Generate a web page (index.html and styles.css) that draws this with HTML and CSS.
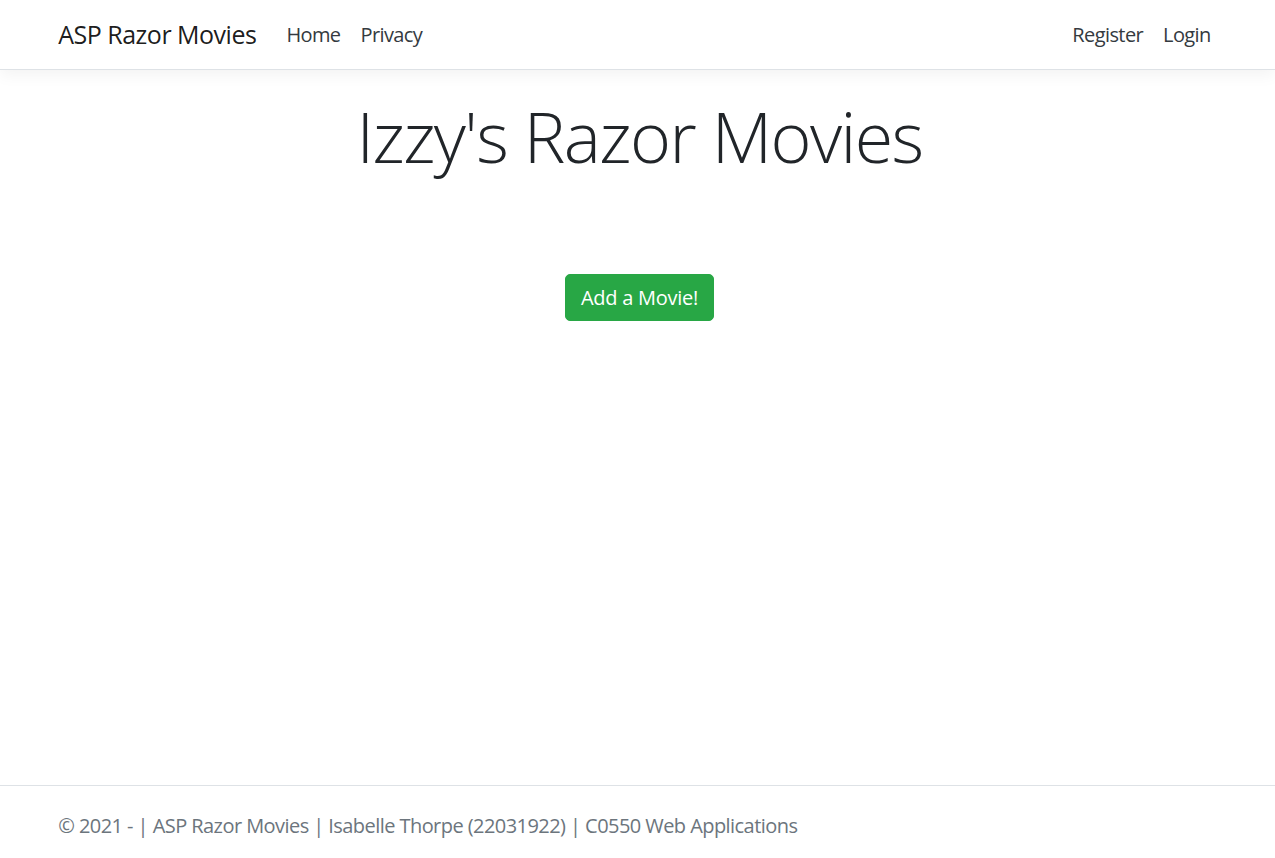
FILE: index.html
```html
<!DOCTYPE html>
<html lang="en">
<head>
<meta charset="utf-8">
<title>Izzy's Razor Movies</title>
<link rel="stylesheet" href="styles.css">
</head>
<body>
<header class="navbar">
  <div class="container nav-inner">
    <a class="brand" href="#">ASP Razor Movies</a>
    <ul class="nav nav-left">
      <li><a class="nav-link" href="#">Home</a></li>
      <li><a class="nav-link" href="#">Privacy</a></li>
    </ul>
    <ul class="nav nav-right">
      <li><a class="nav-link" href="#">Register</a></li>
      <li><a class="nav-link" href="#">Login</a></li>
    </ul>
  </div>
</header>
<main class="container main">
  <div class="hero">
    <h1 class="display">Izzy's Razor Movies</h1>
    <a class="btn-success" href="#">Add a Movie!</a>
  </div>
</main>
<footer class="footer">
  <div class="container footer-text">&copy; 2021 - | ASP Razor Movies | Isabelle Thorpe (22031922) | C0550 Web Applications</div>
</footer>
</body>
</html>
```
FILE: styles.css
```css
* { box-sizing: border-box; }
html, body { margin: 0; padding: 0; }
body {
  font-family: "Segoe UI", "Open Sans", "Noto Sans", sans-serif;
  font-size: 20px;
  line-height: 1.5;
  letter-spacing: -0.5px;
  color: #212529;
  background: #fff;
  min-height: 100vh;
  display: flex;
  flex-direction: column;
}
a { text-decoration: none; }
.container {
  width: 1200px;
  margin: 0 auto;
  padding: 0 16.75px 0 20.75px;
}
.navbar {
  background: #fff;
  border-bottom: 1px solid #dee2e6;
  box-shadow: 0 5px 15px rgba(0,0,0,.05);
  padding: 9.5px 0;
  margin-bottom: 20px;
}
.nav-inner {
  display: flex;
  align-items: center;
}
.brand {
  font-size: 25px;
  line-height: 37.5px;
  padding: 6.25px 0;
  margin-right: 20px;
  color: rgba(0,0,0,.9);
  white-space: nowrap;
}
.nav {
  list-style: none;
  margin: 0;
  padding: 0;
  display: flex;
}
.nav-left { flex: 1; }
.nav-link {
  display: block;
  padding: 10px 10px;
  font-size: 20px;
  line-height: 30px;
  letter-spacing: -0.6px;
  color: #343a40;
}
.main { flex: 1; }
.hero { text-align: center; }
.display {
  font-size: 70px;
  font-weight: 300;
  line-height: 1.2;
  letter-spacing: -1.6px;
  margin: 4px 0 96px;
}
.btn-success {
  display: inline-block;
  background: #28a745;
  border: 1px solid #28a745;
  color: #fff;
  font-size: 20px;
  line-height: 30px;
  letter-spacing: -0.25px;
  padding: 7.5px 15px;
  border-radius: 5px;
}
.footer {
  border-top: 1px solid #dee2e6;
  height: 73px;
}
.footer-text {
  color: #6c757d;
  line-height: 80px;
  letter-spacing: -0.56px;
  white-space: nowrap;
}
```
